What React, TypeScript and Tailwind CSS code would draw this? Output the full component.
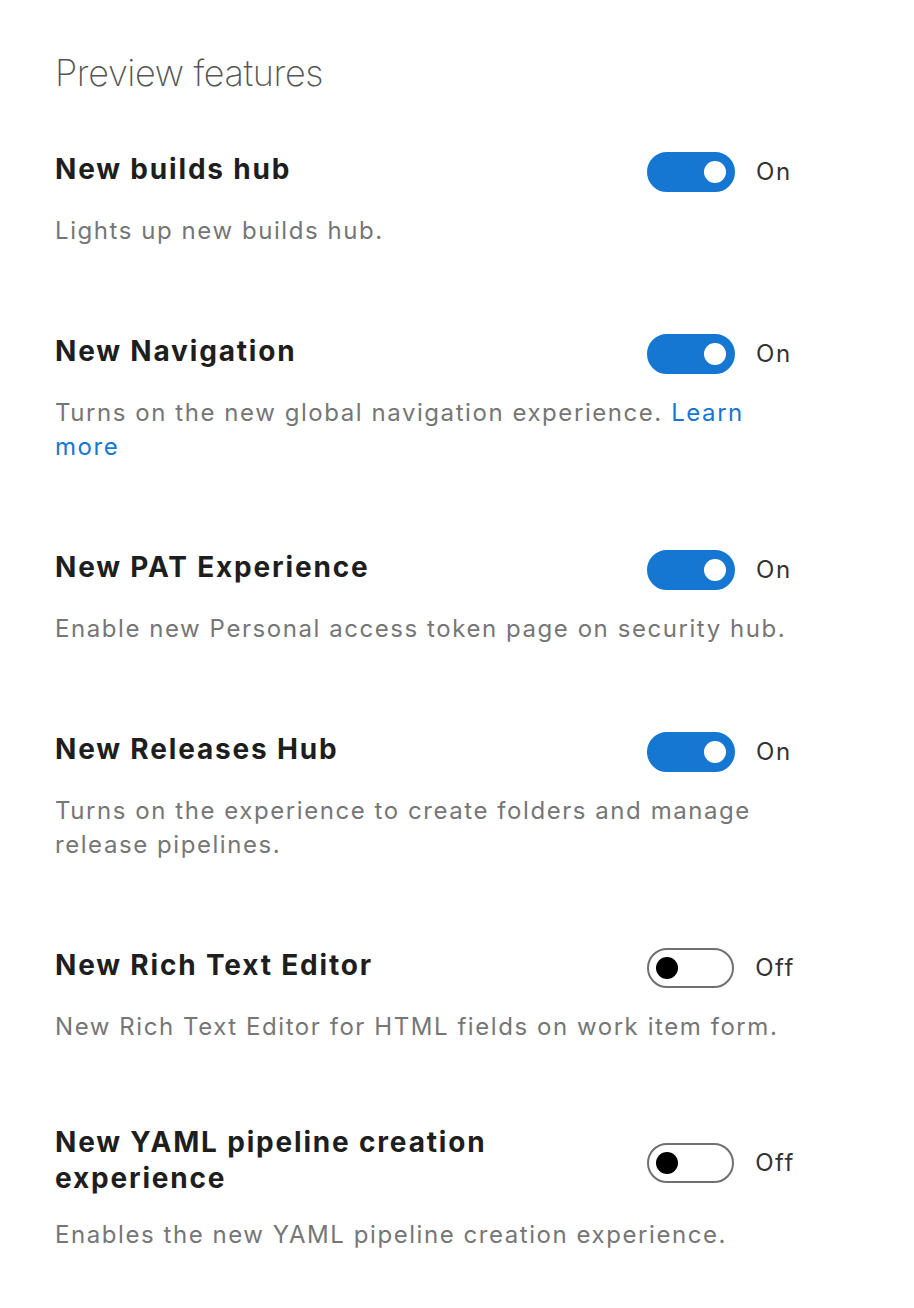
import React from "react";

type Feature = {
  title: string;
  description: React.ReactNode;
  enabled: boolean;
};

const features: Feature[] = [
  {
    title: "New builds hub",
    description: "Lights up new builds hub.",
    enabled: true,
  },
  {
    title: "New Navigation",
    description: (
      <>
        Turns on the new global navigation experience.{" "}
        <a href="#" className="text-[#1677d2]">
          Learn more
        </a>
      </>
    ),
    enabled: true,
  },
  {
    title: "New PAT Experience",
    description: "Enable new Personal access token page on security hub.",
    enabled: true,
  },
  {
    title: "New Releases Hub",
    description:
      "Turns on the experience to create folders and manage release pipelines.",
    enabled: true,
  },
  {
    title: "New Rich Text Editor",
    description: "New Rich Text Editor for HTML fields on work item form.",
    enabled: false,
  },
  {
    title: "New YAML pipeline creation experience",
    description: "Enables the new YAML pipeline creation experience.",
    enabled: false,
  },
];

const Toggle = ({ on }: { on: boolean }) => (
  <div className="flex items-center gap-[21px] pt-[6px]">
    <div
      className={`flex h-[40px] w-[88px] items-center rounded-full border-2 px-[7px] ${
        on
          ? "justify-end border-[#1677d2] bg-[#1677d2]"
          : "justify-start border-[#707070] bg-white"
      }`}
    >
      <span
        className={`block h-[22px] w-[22px] rounded-full ${
          on ? "bg-white" : "bg-black"
        }`}
      />
    </div>
    <span className="text-[24px] leading-[34px] tracking-[0.065em] text-[#333333]">
      {on ? "On" : "Off"}
    </span>
  </div>
);

const FeatureRow = ({ feature }: { feature: Feature }) => (
  <div className="flex flex-col">
    <div className="flex items-center gap-4">
      <div className="flex-1 text-[28px] font-bold leading-[36px] tracking-[0.065em] text-[#1e1e1e]">
        {feature.title}
      </div>
      <div className="w-[148px] shrink-0">
        <Toggle on={feature.enabled} />
      </div>
    </div>
    <p className="mt-[22px] text-[24px] leading-[34px] tracking-[0.065em] text-[#767676]">
      {feature.description}
    </p>
  </div>
);

export default function App() {
  return (
    <div
      className="min-h-screen w-full bg-white"
      style={{ fontFamily: "Inter, 'Noto Sans', sans-serif" }}
    >
      <div className="w-[850px] px-[55px] pt-[51px] pb-10">
        <h1 className="text-[36px] font-extralight leading-[44px] tracking-[-0.01em] text-[#555555]">
          Preview features
        </h1>
        <div className="mt-[51px] flex flex-col gap-[80px]">
          {features.map((f) => (
            <FeatureRow key={f.title} feature={f} />
          ))}
        </div>
      </div>
    </div>
  );
}
